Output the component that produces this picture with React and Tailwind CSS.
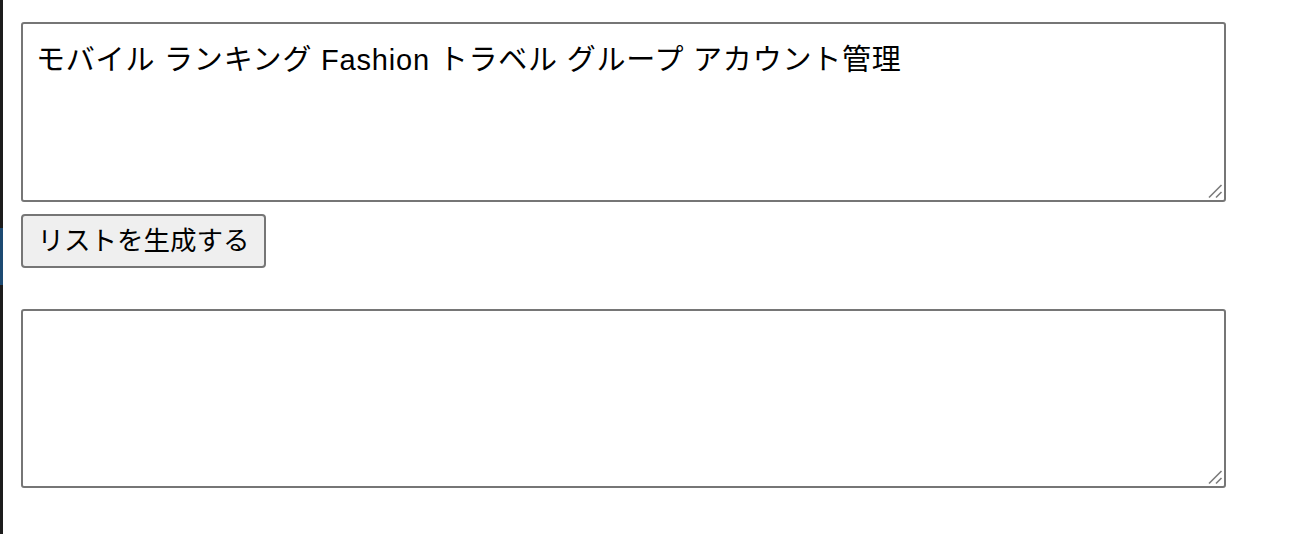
import React from "react";

function Handle() {
  return (
    <svg
      className="pointer-events-none absolute right-[3px] bottom-[3px]"
      width="16"
      height="16"
      viewBox="0 0 16 16"
    >
      <line x1="2" y1="14.5" x2="14.5" y2="2" stroke="#7a7a7a" strokeWidth="1.6" />
      <line x1="9" y1="14.5" x2="14.5" y2="9" stroke="#7a7a7a" strokeWidth="1.6" />
    </svg>
  );
}

export default function App() {
  const font = { fontFamily: '"Liberation Sans", "Noto Sans CJK JP", sans-serif' };
  return (
    <div className="flex min-h-[534px] w-[1310px] bg-white" style={font}>
      <div className="flex w-[3px] shrink-0 flex-col">
        <div className="h-[228px] bg-[#1c1c1c]" />
        <div className="h-[57px] bg-[#1d4a72]" />
        <div className="flex-1 bg-[#1c1c1c]" />
      </div>
      <div className="flex flex-col items-start pl-[18px] pt-[22px]">
        <div className="relative">
          <textarea
            className="block h-[180px] w-[1205px] resize-none rounded-[3px] border-2 border-[#767676] px-[13px] pt-[18px] text-[29px] leading-[36px] tracking-[0.8px] text-black outline-none"
            style={font}
            defaultValue="モバイル ランキング Fashion トラベル グループ アカウント管理"
          />
          <Handle />
        </div>
        <button
          className="mt-[12px] flex h-[54px] w-[245px] items-center justify-center rounded-[4px] border-2 border-[#767676] bg-[#efefef] text-[26.5px] leading-none text-black"
          style={font}
        >
          リストを生成する
        </button>
        <div className="relative mt-[41px]">
          <textarea
            className="block h-[179px] w-[1205px] resize-none rounded-[3px] border-2 border-[#767676] px-[13px] pt-[18px] text-[29px] leading-[36px] text-black outline-none"
            style={font}
            defaultValue=""
          />
          <Handle />
        </div>
      </div>
    </div>
  );
}
